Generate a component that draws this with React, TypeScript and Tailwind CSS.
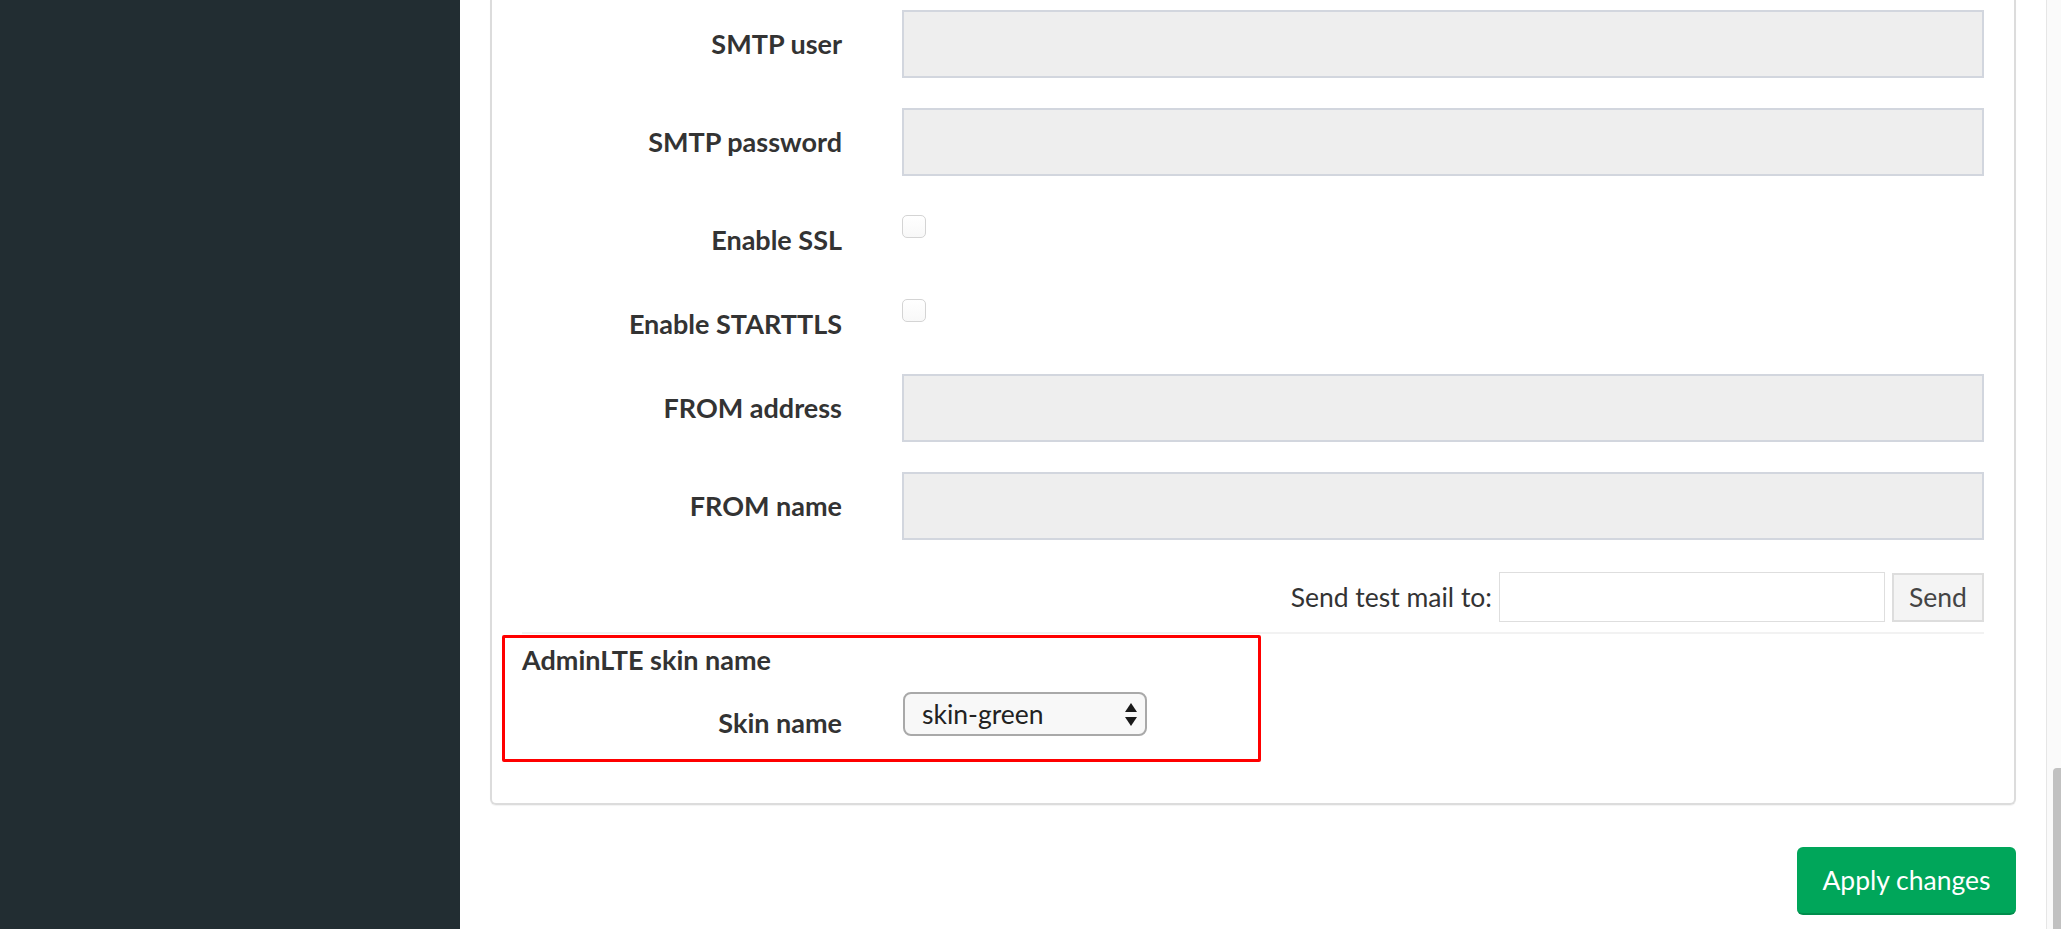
import React from "react";

const fields = [
  { label: "SMTP user", kind: "input" },
  { label: "SMTP password", kind: "input" },
  { label: "Enable SSL", kind: "checkbox" },
  { label: "Enable STARTTLS", kind: "checkbox" },
  { label: "FROM address", kind: "input" },
  { label: "FROM name", kind: "input" },
];

function Checkbox() {
  return (
    <span className="mt-[9px] block h-[23px] w-[24px] rounded-[5px] border border-[#d4d4d4] bg-gradient-to-b from-white to-[#f8f8f8]" />
  );
}

function SelectArrows() {
  return (
    <svg width="12" height="23" viewBox="0 0 12 23" className="block">
      <path d="M6 0 L12 9 L0 9 Z" fill="#1a1a1a" />
      <path d="M0 14 L12 14 L6 23 Z" fill="#1a1a1a" />
    </svg>
  );
}

export default function App() {
  return (
    <div className="flex h-[929px] w-[2061px] overflow-hidden bg-white font-['Lato',sans-serif] text-[27px] text-[#333]">
      {/* Sidebar */}
      <aside className="w-[460px] shrink-0 bg-[#222d32]" />

      {/* Content */}
      <main className="w-[1586px] shrink-0 px-[30px]">
        <div className="rounded-b-[6px] border-x-2 border-b-2 border-[#dcdcdc] pb-[41px] pl-[30px] pr-[30px] pt-[10px] shadow-[0_1px_1px_rgba(0,0,0,0.05)]">
          <div className="flex flex-col gap-[30px]">
            {fields.map((f) =>
              f.kind === "input" ? (
                <div key={f.label} className="flex items-center">
                  <label className="w-[320px] shrink-0 text-right font-bold leading-[40px]">{f.label}</label>
                  <div className="ml-[60px] h-[68px] flex-1 border-2 border-[#d2d6de] bg-[#eeeeee]" />
                </div>
              ) : (
                <div key={f.label} className="flex items-start">
                  <label className="w-[320px] shrink-0 pt-[14px] text-right font-bold leading-[40px]">{f.label}</label>
                  <div className="ml-[60px]">
                    <Checkbox />
                  </div>
                </div>
              )
            )}

            <div className="mt-[2px] flex items-center justify-end">
              <span className="mr-[7px] text-[26.5px] leading-[40px]">Send test mail to:</span>
              <div className="h-[50px] w-[386px] border border-[#dedede] bg-white" />
              <button className="ml-[7px] h-[49px] w-[92px] border-2 border-[#dddddd] bg-[#f4f4f4] text-[26.5px] leading-[40px] text-[#444]">
                Send
              </button>
            </div>
          </div>

          <div className="mt-[10px] h-[2px] bg-[#f2f2f2]" />

          {/* AdminLTE skin section (highlighted) */}
          <div className="-ml-[20px] mt-[1px] w-[759px] rounded-[2px] border-[3px] border-[#ff0000] pb-[16px] pl-[17px] pt-[2px]">
            <div className="font-bold leading-[40px]">AdminLTE skin name</div>
            <div className="mt-[12px] flex items-start">
              <label className="w-[320px] shrink-0 pt-[11px] text-right font-bold leading-[40px]">Skin name</label>
              <div className="ml-[61px] flex h-[44px] w-[244px] items-center justify-between rounded-[8px] border-2 border-[#a9a9a9] bg-[#f8f8f8] pl-[17px] pr-[8px]">
                <span className="text-[26.5px] leading-[40px] text-[#222]">skin-green</span>
                <SelectArrows />
              </div>
            </div>
          </div>
        </div>

        <div className="mt-[42px] flex justify-end">
          <button className="h-[68px] w-[219px] rounded-[6px] border-b-2 border-[#008d4c] bg-[#00a65a] text-[26.5px] leading-[40px] text-white">
            Apply changes
          </button>
        </div>
      </main>

      {/* Scrollbar */}
      <div className="relative w-[15px] shrink-0 border-l border-[#e6e6e6] bg-[#fafafa]">
        <div className="absolute right-0 top-[768px] h-[200px] w-[8px] rounded-l-[4px] bg-[#c1c1c1]" />
      </div>
    </div>
  );
}
